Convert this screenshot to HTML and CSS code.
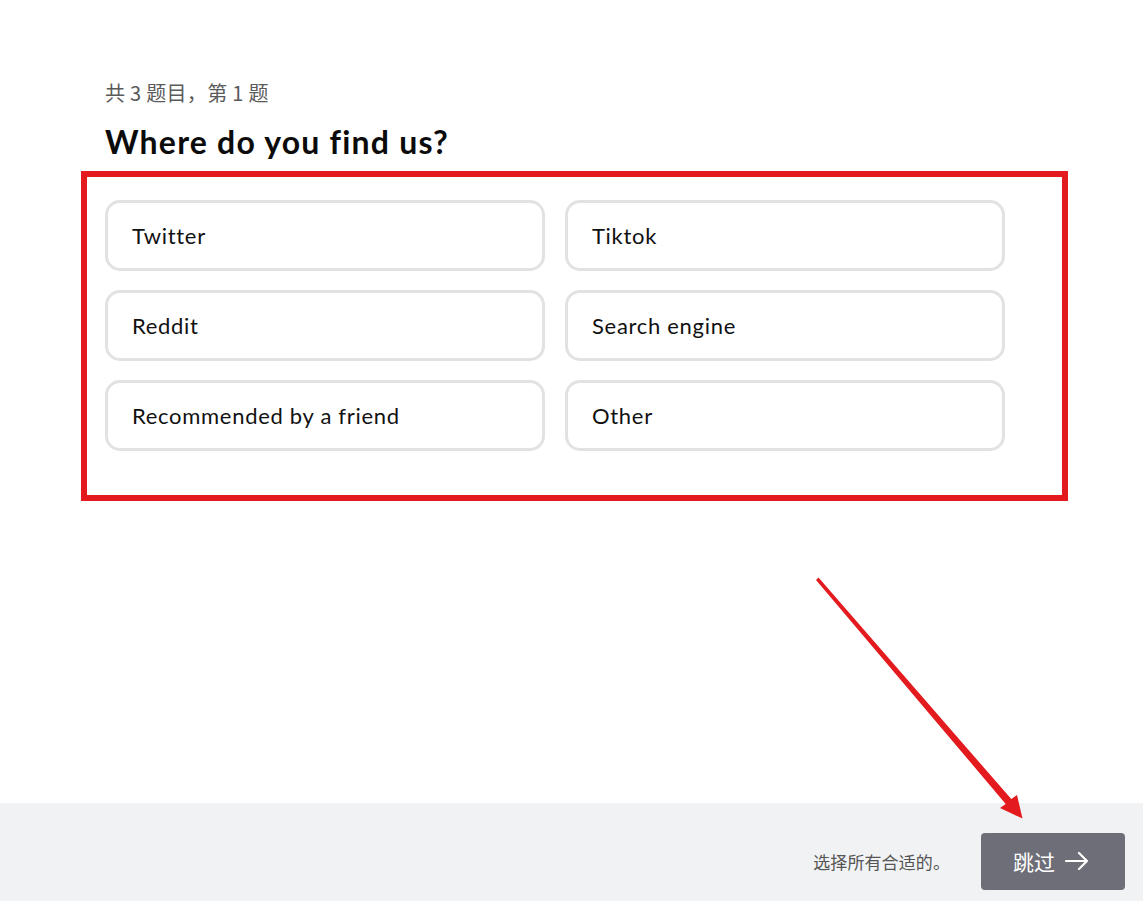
FILE: index.html
```html
<!DOCTYPE html>
<html lang="zh">
<head>
<meta charset="utf-8">
<title>Survey</title>
<link rel="stylesheet" href="styles.css">
</head>
<body>
<div class="page">
  <main class="main">
    <div class="progress">共 3 题目，第 1 题</div>
    <h1 class="title">Where do you find us?</h1>
    <div class="options">
      <div class="option">Twitter</div>
      <div class="option">Tiktok</div>
      <div class="option">Reddit</div>
      <div class="option">Search engine</div>
      <div class="option">Recommended by a friend</div>
      <div class="option">Other</div>
    </div>
  </main>
  <footer class="footer">
    <span class="hint">选择所有合适的。</span>
    <button class="skip">跳过
      <svg class="skip-arrow" width="24" height="20" viewBox="0 0 24 20"><path d="M1 10 H22 M14 2 L22 10 L14 18" fill="none" stroke="#fff" stroke-width="2.2" stroke-linecap="round" stroke-linejoin="round"/></svg>
    </button>
  </footer>
  <div class="highlight"></div>
  <svg class="annot-arrow" width="1143" height="901" viewBox="0 0 1143 901">
    <polygon points="816,580 818.5,577.5 1011.3,799.1 1017,795 1022.5,818.5 1000,808 1005.7,803.9" fill="#e31b1f"/>
  </svg>
</div>
</body>
</html>
```

FILE: styles.css
```css
* { box-sizing: border-box; }
html, body { margin: 0; padding: 0; background: #fff; }
body { font-family: Lato, "Noto Sans CJK SC", sans-serif; color: #111; }
.page { position: relative; min-height: 901px; display: flex; flex-direction: column; }
.main { flex: 1; padding: 81px 0 0 105px; }
.progress {
  font-family: "Noto Sans CJK SC", "Liberation Sans", sans-serif;
  font-size: 20px; line-height: 24px; color: #5a5a5a; letter-spacing: 0.3px;
}
.title {
  margin: 17px 0 38px; font-size: 32px; line-height: 40px; font-weight: 700; color: #0b0b0b;
  letter-spacing: 1.2px;
}
.options {
  display: grid; grid-template-columns: 440px 440px; column-gap: 20px; row-gap: 19px;
}
.option {
  height: 71px; border: 3px solid #e2e2e2; border-radius: 15px;
  display: flex; align-items: center; padding-left: 24px;
  font-size: 22px; color: #111; letter-spacing: 0.7px;
}
.footer {
  height: 98px; background: #f1f2f4; display: flex; align-items: center; justify-content: flex-end;
  padding: 0 18px 0 0; gap: 31px;
}
.hint { font-family: "Noto Sans CJK SC", sans-serif; font-size: 17px; letter-spacing: 0.1px; color: #555; margin-top: 18px; }
.skip {
  margin-top: 18px;
  width: 144px; height: 57px; background: #6d6e77; border: none; border-radius: 4px;
  color: #fff; font-family: "Noto Sans CJK SC", sans-serif; font-size: 21px;
  display: flex; align-items: center; justify-content: center; gap: 10px; padding: 0 4px 0 0;
}
.skip-arrow { display: block; }
.highlight {
  position: absolute; left: 81px; top: 171px; width: 987px; height: 330px;
  border: 6px solid #e31b1f; pointer-events: none;
}
.annot-arrow { position: absolute; left: 0; top: 0; pointer-events: none; }
```
